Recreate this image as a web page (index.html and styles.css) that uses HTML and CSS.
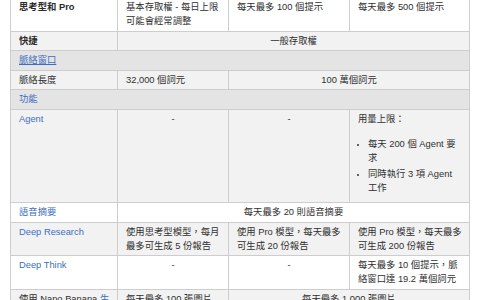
FILE: index.html
```html
<!DOCTYPE html>
<html lang="zh-Hant">
<head>
<meta charset="utf-8">
<link rel="stylesheet" href="styles.css">
</head>
<body>
<table class="plans">
  <colgroup>
    <col class="c1"><col class="c2"><col class="c3"><col class="c4">
  </colgroup>
  <tbody>
    <tr class="row-white">
      <th>思考型和 Pro</th>
      <td class="nw">基本存取權 - 每日上限<br>可能會經常調整</td>
      <td>每天最多 100 個提示</td>
      <td>每天最多 500 個提示</td>
    </tr>
    <tr class="row-gray">
      <th>快捷</th>
      <td colspan="3" class="center">一般存取權</td>
    </tr>
    <tr class="row-section">
      <td colspan="4"><a class="link underline" href="#">脈絡窗口</a></td>
    </tr>
    <tr class="row-gray">
      <td>脈絡長度</td>
      <td>32,000 個詞元</td>
      <td colspan="2" class="center">100 萬個詞元</td>
    </tr>
    <tr class="row-section">
      <td colspan="4"><a class="link" href="#">功能</a></td>
    </tr>
    <tr class="row-gray">
      <td><a class="link" href="#">Agent</a></td>
      <td class="center">-</td>
      <td class="center">-</td>
      <td>
        <p class="limit">用量上限：</p>
        <ul class="limits">
          <li class="nw">每天 200 個 Agent 要<br>求</li>
          <li class="nw">同時執行 3 項 Agent<br>工作</li>
        </ul>
      </td>
    </tr>
    <tr class="row-white">
      <td><a class="link" href="#">語音摘要</a></td>
      <td colspan="3" class="center">每天最多 20 則語音摘要</td>
    </tr>
    <tr class="row-gray">
      <td><a class="link" href="#">Deep Research</a></td>
      <td class="nw">使用思考型模型，每月<br>最多可生成 5 份報告</td>
      <td class="nw">使用 Pro 模型，每天最多<br>可生成 20 份報告</td>
      <td class="nw">使用 Pro 模型，每天最多<br>可生成 200 份報告</td>
    </tr>
    <tr class="row-white">
      <td><a class="link" href="#">Deep Think</a></td>
      <td class="center">-</td>
      <td class="center">-</td>
      <td class="nw">每天最多 10 個提示，脈<br>絡窗口達 19.2 萬個詞元</td>
    </tr>
    <tr class="row-gray">
      <td class="nw">使用 Nano Banana <a class="link" href="#">生<br>成圖片</a></td>
      <td class="nw">每天最多 100 張圖片</td>
      <td colspan="2" class="center">每天最多 1,000 張圖片</td>
    </tr>
  </tbody>
</table>
</body>
</html>
```

FILE: styles.css
```css
html, body {
  margin: 0;
  padding: 0;
  background: #ffffff;
}

body {
  font-family: "Liberation Sans", "Noto Sans CJK TC", sans-serif;
  font-size: 9.33px;
  line-height: 14px;
  color: #303030;
}

.plans {
  border-collapse: collapse;
  table-layout: fixed;
  width: 459px;
  margin: -3px 0 0 10px;
}

.c1 { width: 107px; }
.c2 { width: 111px; }
.c3 { width: 121px; }
.c4 { width: 120px; }

.plans th,
.plans td {
  border: 1px solid #cdcdcd;
  padding: 2.25px 8px;
  vertical-align: top;
  text-align: left;
  font-weight: normal;
}

.plans th {
  font-weight: bold;
  color: #2a2a2a;
}

.plans .center {
  text-align: center;
}

.nw {
  white-space: nowrap;
}

.row-white td,
.row-white th {
  background: #ffffff;
}

.row-gray td,
.row-gray th {
  background: #f2f2f2;
}

.row-section td {
  background: #e4e4e4;
}

.link {
  color: #3d6fbf;
  text-decoration: none;
}

.link.underline {
  text-decoration: underline;
}

.limit {
  margin: 0 0 11px 0;
}

.limits {
  margin: 0 0 5px 0;
  padding-left: 10px;
}

.limits li {
  margin-bottom: 2px;
}

.limits li::marker {
  font-size: 7px;
}
```
